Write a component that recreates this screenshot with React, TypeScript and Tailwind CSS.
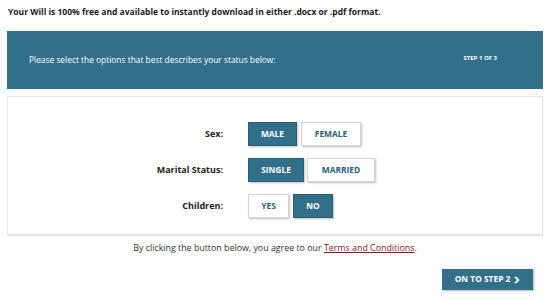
import React, { useState } from "react";

const BLUE = "bg-[#326f8b]";

function Choice({ label, active, width, onClick }: { label: string; active: boolean; width: string; onClick: () => void }) {
  return (
    <button
      onClick={onClick}
      className={`${width} h-[24px] text-[8.4px] font-bold uppercase shadow-[1px_1px_2px_rgba(0,0,0,0.25)] ${
        active ? `${BLUE} text-white border border-[#2a5f78]` : "bg-white text-[#2c5f7a] border border-[#d4d4d4]"
      }`}
    >
      {label}
    </button>
  );
}

export default function App() {
  const [sex, setSex] = useState("male");
  const [marital, setMarital] = useState("single");
  const [children, setChildren] = useState("no");

  return (
    <div className="w-[550px] h-[300px] bg-white font-['Open_Sans',sans-serif] text-[#222]">
      <p className="pl-[8px] pt-[6px] h-[31px] text-[8.5px] font-bold text-[#1a1a1a]">
        Your Will is 100% free and available to instantly download in either .docx or .pdf format.
      </p>

      <div className={`mx-[7px] h-[58px] ${BLUE} flex items-center justify-between pl-[22px] pr-[46px] text-white`}>
        <span className="text-[8.4px]">Please select the options that best describes your status below:</span>
        <span className="text-[6px] font-bold -mt-[4px]">STEP 1 OF 3</span>
      </div>

      <div className="mx-[7px] mt-[7px] border border-[#e3e3e3] border-b-2 pt-[25px] pb-[16px]">
        <div className="grid grid-cols-[215px_auto] gap-x-[25px] gap-y-[12px] items-center">
          <span className="text-right text-[9px] font-bold">Sex:</span>
          <div className="flex gap-[4px]">
            <Choice label="Male" width="w-[49px]" active={sex === "male"} onClick={() => setSex("male")} />
            <Choice label="Female" width="w-[60px]" active={sex === "female"} onClick={() => setSex("female")} />
          </div>
          <span className="text-right text-[9px] font-bold">Marital Status:</span>
          <div className="flex gap-[3px]">
            <Choice label="Single" width="w-[56px]" active={marital === "single"} onClick={() => setMarital("single")} />
            <Choice label="Married" width="w-[68px]" active={marital === "married"} onClick={() => setMarital("married")} />
          </div>
          <span className="text-right text-[9px] font-bold">Children:</span>
          <div className="flex gap-[4px]">
            <Choice label="Yes" width="w-[41px]" active={children === "yes"} onClick={() => setChildren("yes")} />
            <Choice label="No" width="w-[40px]" active={children === "no"} onClick={() => setChildren("no")} />
          </div>
        </div>
      </div>

      <p className="mt-[6px] text-center text-[8.85px] text-[#333]">
        By clicking the button below, you agree to our{" "}
        <a href="#" className="text-[#8b1a2b] underline">Terms and Conditions</a>.
      </p>

      <div className="flex justify-end pr-[17px] mt-[14px]">
        <button className={`${BLUE} h-[21px] w-[91px] text-white text-[8.4px] font-bold flex items-center justify-center gap-[4px] shadow-[1px_1px_2px_rgba(0,0,0,0.3)]`}>
          ON TO STEP 2
          <svg width="6" height="8" viewBox="0 0 6 8" fill="none" stroke="white" strokeWidth="1.8">
            <path d="M1.2 0.8 L4.4 4 L1.2 7.2" />
          </svg>
        </button>
      </div>
    </div>
  );
}
